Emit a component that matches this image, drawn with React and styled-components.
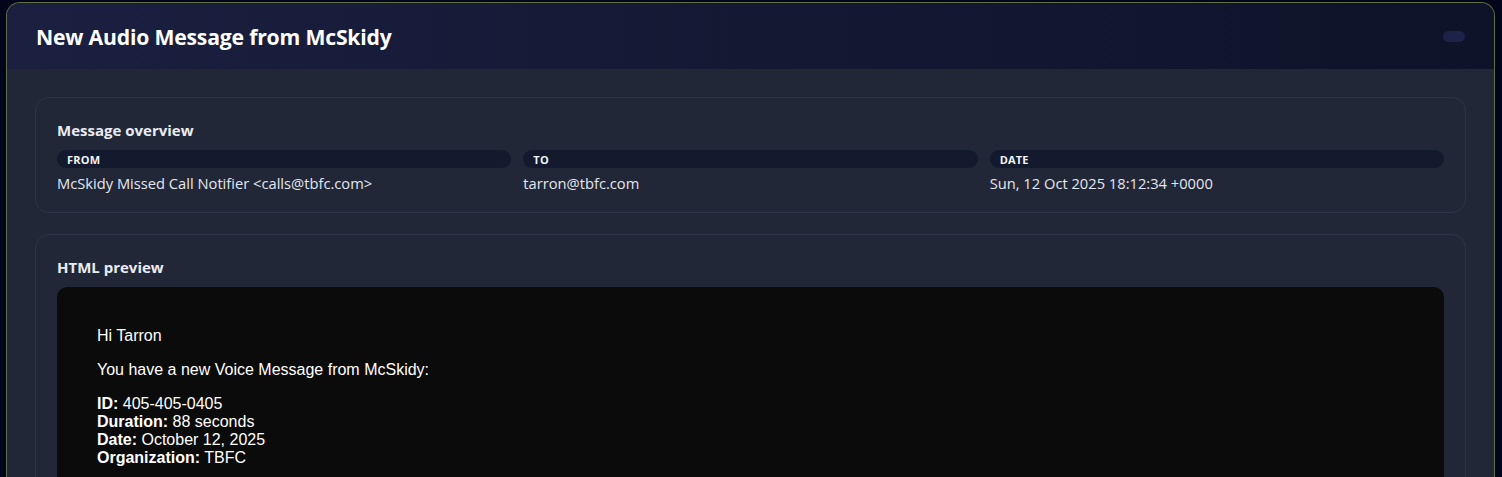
import styled, { createGlobalStyle } from "styled-components";

const GlobalStyle = createGlobalStyle`
  html, body {
    margin: 0;
    padding: 0;
    background: #03051a;
    font-family: "Open Sans", "Noto Sans", sans-serif;
    color: #e6e9f2;
  }
`;

const Page = styled.div`
  padding: 2px 7px 0 6px;
  height: 477px;
  box-sizing: border-box;
  overflow: hidden;
`;

const Window = styled.div`
  border: 1px solid #5d7046;
  border-bottom: none;
  border-radius: 14px 14px 0 0;
  overflow: hidden;
  background: #222738;
  height: 100%;
`;

const Header = styled.header`
  height: 66px;
  display: flex;
  align-items: center;
  justify-content: space-between;
  padding: 0 29px 0 29px;
  background: linear-gradient(90deg, #1b2041 0%, #141833 50%, #0f1329 100%);
`;

const Title = styled.h1`
  margin: 0;
  font-size: 21.2px;
  font-weight: 700;
  color: #ffffff;
  letter-spacing: -0.2px;
`;

const Toggle = styled.div`
  width: 22px;
  height: 11px;
  border-radius: 6px;
  background: #1c2248;
`;

const Body = styled.main`
  padding: 28px 28px 0 28px;
  display: flex;
  flex-direction: column;
  gap: 21px;
`;

const Card = styled.section`
  border: 1px solid #2d3447;
  border-radius: 14px;
  padding: ${(p) => p.$pad || "22px 21px 19px"};
  display: flex;
  flex-direction: column;
  gap: 10px;
`;

const CardTitle = styled.h2`
  margin: 0;
  font-size: 15px;
  line-height: 20px;
  font-weight: 700;
  color: #e9ecf4;
`;

const Fields = styled.div`
  display: grid;
  grid-template-columns: repeat(3, 1fr);
  gap: 12px;
`;

const Field = styled.div`
  display: flex;
  flex-direction: column;
  gap: 5px;
`;

const Label = styled.div`
  height: 18px;
  border-radius: 9px;
  background: #131a2d;
  padding: 0 10px;
  display: flex;
  align-items: center;
  font-size: 11px;
  font-weight: 700;
  letter-spacing: 0.2px;
  color: #f2f4f8;
  text-transform: uppercase;
`;

const Value = styled.div`
  font-size: 14.7px;
  line-height: 20px;
  color: #e2e6ef;
`;

const Preview = styled.div`
  background: #0b0b0b;
  border-radius: 10px 10px 0 0;
  padding: 24px 40px;
  min-height: 200px;
  font-family: "Liberation Sans", Arial, sans-serif;
  font-size: 16px;
  color: #ffffff;

  p {
    margin: 16px 0;
  }
`;

const fields = [
  { label: "From", value: "McSkidy Missed Call Notifier <calls@tbfc.com>" },
  { label: "To", value: "tarron@tbfc.com" },
  { label: "Date", value: "Sun, 12 Oct 2025 18:12:34 +0000" },
];

export default function App() {
  return (
    <>
      <GlobalStyle />
      <Page>
        <Window>
          <Header>
            <Title>New Audio Message from McSkidy</Title>
            <Toggle />
          </Header>
          <Body>
            <Card>
              <CardTitle>Message overview</CardTitle>
              <Fields>
                {fields.map((f) => (
                  <Field key={f.label}>
                    <Label>{f.label}</Label>
                    <Value>{f.value}</Value>
                  </Field>
                ))}
              </Fields>
            </Card>
            <Card $pad="22px 21px 0">
              <CardTitle>HTML preview</CardTitle>
              <Preview>
                <p>Hi Tarron</p>
                <p>You have a new Voice Message from McSkidy:</p>
                <p>
                  <b>ID:</b> 405-405-0405
                  <br />
                  <b>Duration:</b> 88 seconds
                  <br />
                  <b>Date:</b> October 12, 2025
                  <br />
                  <b>Organization:</b> TBFC
                </p>
              </Preview>
            </Card>
          </Body>
        </Window>
      </Page>
    </>
  );
}
